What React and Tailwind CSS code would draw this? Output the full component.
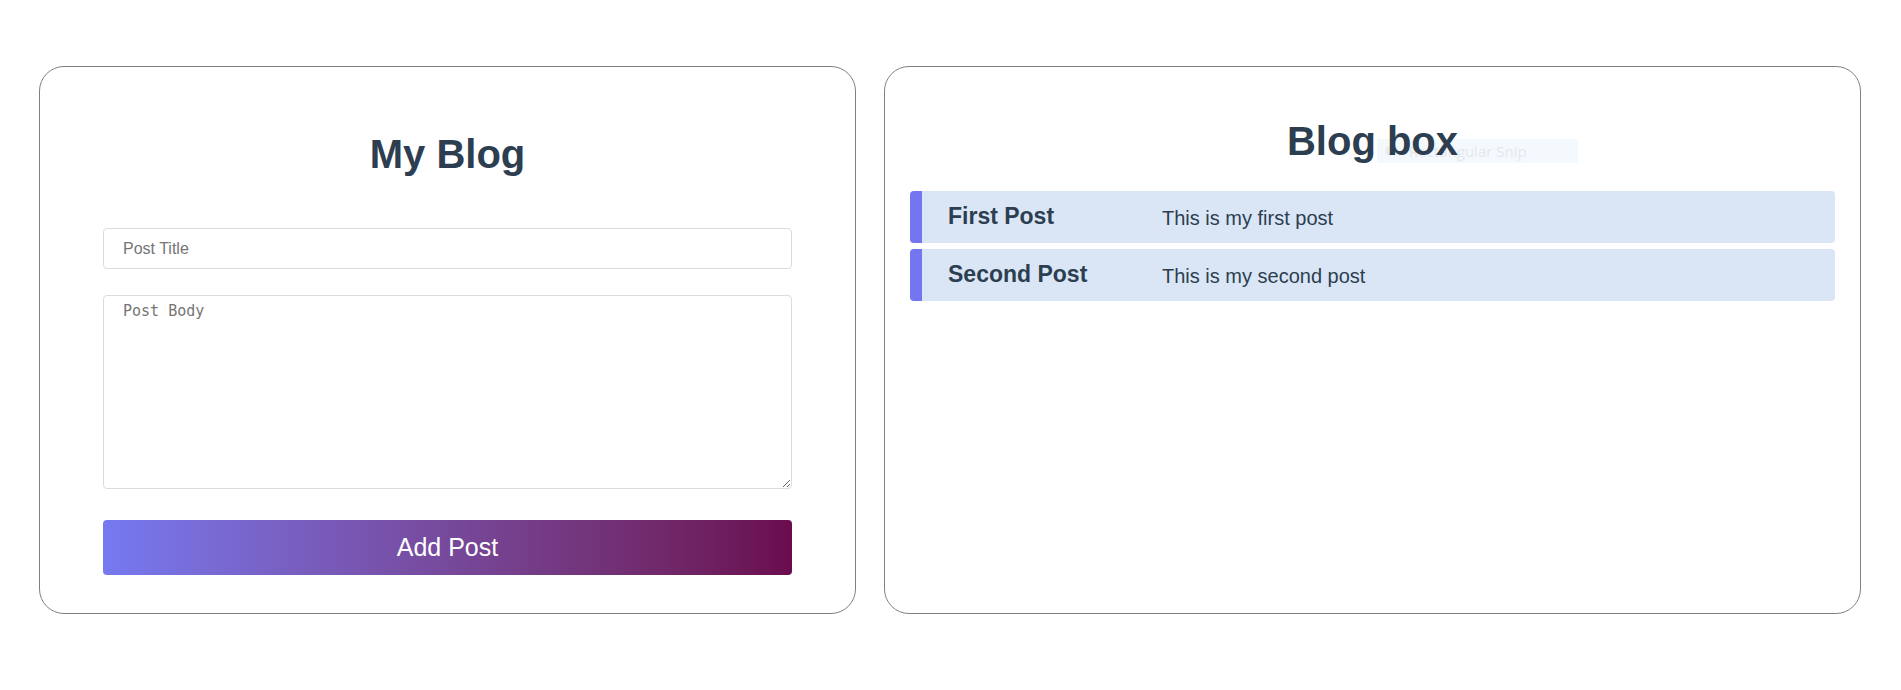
import React, { useState } from 'react'

const POSTS = [
  { id: 1, title: 'First Post', body: 'This is my first post' },
  { id: 2, title: 'Second Post', body: 'This is my second post' },
]

export default function App() {
  const [posts, setPosts] = useState(POSTS)
  const [title, setTitle] = useState('')
  const [body, setBody] = useState('')

  const addPost = () => {
    if (!title.trim()) return
    setPosts([...posts, { id: Date.now(), title, body }])
    setTitle('')
    setBody('')
  }

  return (
    <div className="min-h-[690px] bg-white pt-[66px] pl-[39px] flex gap-[28px] font-['Liberation_Sans',Arial,sans-serif] text-[#2c3e50]">
      {/* Form card */}
      <div className="w-[817px] h-[548px] shrink-0 border border-[#808080] rounded-[25px] px-[63px] pt-[64px]">
        <h1 className="text-center text-[40px] leading-[46px] font-bold">My Blog</h1>
        <input
          value={title}
          onChange={(e) => setTitle(e.target.value)}
          placeholder="Post Title"
          className="mt-[51px] block w-full h-[41px] border border-[#dcdcdc] rounded-[4px] px-[19px] text-[16px] text-[#2c3e50] placeholder:text-[#757575] outline-none"
        />
        <textarea
          value={body}
          onChange={(e) => setBody(e.target.value)}
          placeholder="Post Body"
          className="mt-[26px] block w-full h-[194px] border border-[#dcdcdc] rounded-[4px] px-[19px] pt-[4px] text-[15px] font-['DejaVu_Sans_Mono',monospace] placeholder:text-[#757575] outline-none"
        />
        <button
          onClick={addPost}
          className="mt-[31px] block w-full h-[55px] rounded-[4px] bg-gradient-to-r from-[#7679f0] to-[#6a0c4e] text-white text-[25px]"
        >
          Add Post
        </button>
      </div>

      {/* Posts card */}
      <div className="relative w-[977px] h-[548px] shrink-0 border border-[#808080] rounded-[25px] px-[25px] pt-[51px]">
        {/* snipping tool ghost */}
        <div className="absolute left-[492px] top-[72px] w-[201px] h-[24px] bg-[#f4f9fe] flex items-center pl-[8px] gap-[14px]">
          <span className="w-[10px] h-[10px] rounded-full bg-[#e8edf2]" />
          <span className="text-[15px] text-[#e4e8ec] font-['Open_Sans',sans-serif]">Rectangular Snip</span>
        </div>
        <h2 className="relative text-center text-[40px] leading-[46px] font-bold">Blog box</h2>
        <div className="mt-[27px] flex flex-col gap-[6px]">
          {posts.map((p) => (
            <div key={p.id} className="flex items-center h-[52px] rounded-[4px] overflow-hidden bg-[#dae6f6]">
              <div className="w-[12px] h-full bg-[#7476ef]" />
              <h3 className="w-[240px] pl-[26px] pb-[2px] text-[23px] font-bold">{p.title}</h3>
              <p className="pt-[2px] text-[20px]">{p.body}</p>
            </div>
          ))}
        </div>
      </div>
    </div>
  )
}
